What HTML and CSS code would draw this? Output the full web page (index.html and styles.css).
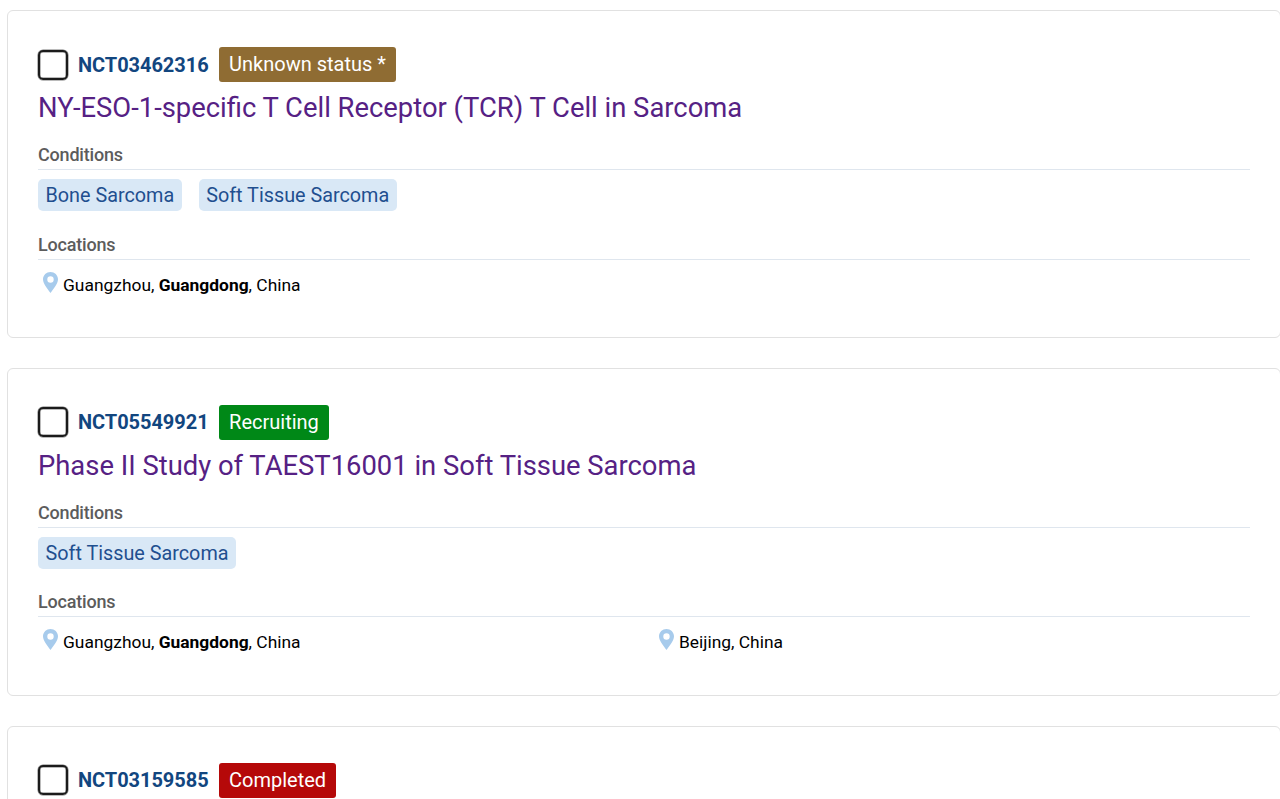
FILE: index.html
```html
<!DOCTYPE html>
<html lang="en">
<head>
<meta charset="utf-8">
<title>Trials</title>
<link rel="stylesheet" href="styles.css">
</head>
<body>
<svg class="sprite" width="0" height="0" aria-hidden="true"><symbol id="pin" viewBox="0 0 15 21"><path fill-rule="evenodd" d="M7.500 0C3.400 0 0 3.200 0 7.300c0 4.300 4.600 10 7.500 13.700C10.400 17.300 15 11.600 15 7.300 15 3.200 11.600 0 7.500 0Zm0 4.300a3.200 3.200 0 1 1 0 6.400 3.200 3.200 0 0 1 0-6.400Z"/></symbol></svg>
<main class="list">
  <article class="card">
    <div class="head"><span class="check"></span><a class="nct">NCT03462316</a><span class="status unknown">Unknown status *</span></div>
    <h2 class="title">NY-ESO-1-specific T Cell Receptor (TCR) T Cell in Sarcoma</h2>
    <h3 class="label">Conditions</h3>
    <div class="pills"><span class="pill">Bone Sarcoma</span><span class="pill">Soft Tissue Sarcoma</span></div>
    <h3 class="label">Locations</h3>
    <div class="locs">
      <div class="loc"><svg class="pin"><use href="#pin"/></svg><span>Guangzhou, <b>Guangdong</b>, China</span></div>
    </div>
  </article>
  <article class="card">
    <div class="head"><span class="check"></span><a class="nct">NCT05549921</a><span class="status recruiting">Recruiting</span></div>
    <h2 class="title">Phase II Study of TAEST16001 in Soft Tissue Sarcoma</h2>
    <h3 class="label">Conditions</h3>
    <div class="pills"><span class="pill">Soft Tissue Sarcoma</span></div>
    <h3 class="label">Locations</h3>
    <div class="locs">
      <div class="loc"><svg class="pin"><use href="#pin"/></svg><span>Guangzhou, <b>Guangdong</b>, China</span></div>
      <div class="loc"><svg class="pin"><use href="#pin"/></svg><span>Beijing, China</span></div>
    </div>
  </article>
  <article class="card">
    <div class="head"><span class="check"></span><a class="nct">NCT03159585</a><span class="status completed">Completed</span></div>
  </article>
</main>
</body>
</html>
```
FILE: styles.css
```css
html, body { margin: 0; height: 799px; overflow: hidden; background: #fff; }
body { font-family: Roboto, "Liberation Sans", sans-serif; color: #000; }
.sprite { position: absolute; }
.list { display: flex; flex-direction: column; gap: 30px; padding: 10.2px 0 0 7px; margin-right: -1px; }
.card { box-sizing: border-box; height: 327.8px; padding: 36px 30px 0 30px; border: 1px solid #e1e1e1; border-radius: 6px; background: #fff; flex: none; }
.head { display: flex; align-items: center; height: 35px; }
.check { box-sizing: border-box; width: 30px; height: 30px; border: 2px solid #1b1b1b; box-shadow: 0 0 0 0.5px rgba(27, 27, 27, 0.6), inset 0 0 0 0.5px rgba(27, 27, 27, 0.6); border-radius: 5px; margin-right: 10px; flex: none; }
.nct { font-size: 20px; font-weight: 700; color: #12467f; margin-right: 10.5px; letter-spacing: -0.05px; }
.status { height: 35px; line-height: 35px; padding: 0 10px; border-radius: 3px; color: #fff; font-size: 20px; }
.unknown { background: #8f6c33; }
.recruiting { background: #008817; }
.completed { background: #b50909; }
.title { margin: 8.800px 0 0; font-size: 27.4px; line-height: 34px; font-weight: 400; color: #562184; }
.label { margin: 18px 0 0; height: 26px; line-height: 24px; font-size: 18px; font-weight: 500; color: #5c5c5c; border-bottom: 1px solid #dfe6ee; letter-spacing: -0.2px; }
.pills { display: flex; gap: 17px; margin-top: 9px; height: 32px; }
.pill { height: 32px; line-height: 33.500px; padding: 0 7.5px; border-radius: 5px; background: #d9e8f6; color: #1f4f8f; font-size: 19.800px; }
.pills + .label { margin-top: 21.600px; }
.locs { display: grid; grid-template-columns: 1fr 1fr; gap: 20px; margin-top: 13px; }
.loc { display: flex; align-items: flex-start; font-size: 17.400px; line-height: 24px; padding-left: 5px; }
.pin { width: 15px; height: 21px; fill: #a7cbec; margin-right: 5px; margin-top: -1px; flex: none; }
```
